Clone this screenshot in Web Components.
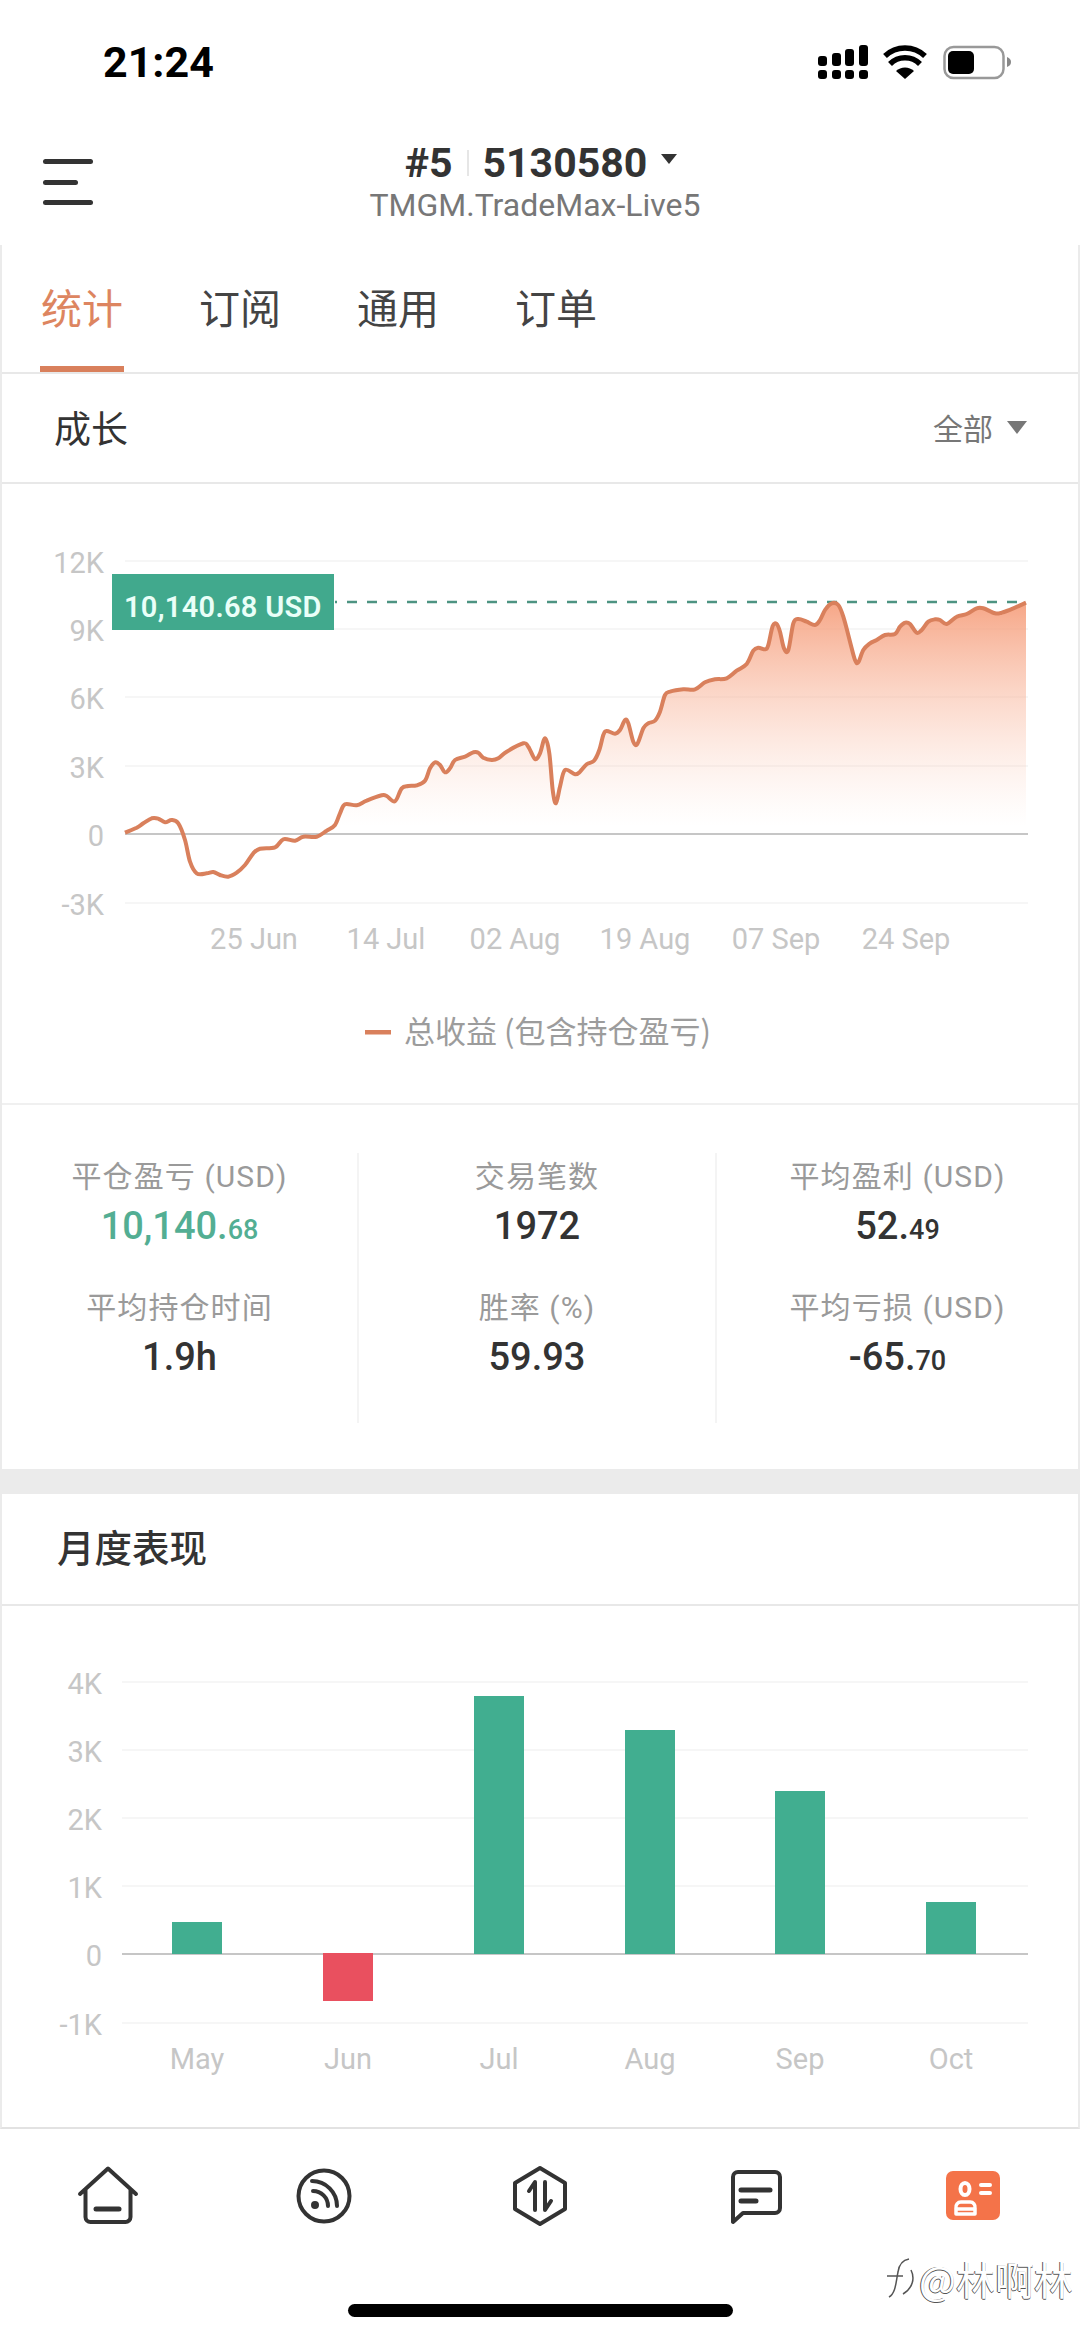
<!DOCTYPE html>
<html lang="zh">
<head>
<meta charset="utf-8">
<title>TMGM.TradeMax-Live5</title>
<style>
  html, body {
    margin: 0;
    background: #fff;
  }
  body {
    width: 1080px;
    height: 2337px;
    overflow: hidden;
    font-family: Roboto, "Noto Sans CJK SC", sans-serif;
    color: #333;
  }
</style>
</head>
<body>
<status-bar></status-bar>
<app-header></app-header>
<main-panel>
  <tab-strip>
    <tab-item active>统计</tab-item>
    <tab-item>订阅</tab-item>
    <tab-item>通用</tab-item>
    <tab-item>订单</tab-item>
  </tab-strip>
  <panel-title heading="成长" action="全部"></panel-title>
  <growth-chart></growth-chart>
  <stat-grid>
    <stat-cell label="平仓盈亏 (USD)" value="10,140." fraction="68" tone="gain"></stat-cell>
    <stat-cell label="交易笔数" value="1972"></stat-cell>
    <stat-cell label="平均盈利 (USD)" value="52." fraction="49"></stat-cell>
    <stat-cell label="平均持仓时间" value="1.9h"></stat-cell>
    <stat-cell label="胜率 (%)" value="59.93"></stat-cell>
    <stat-cell label="平均亏损 (USD)" value="-65." fraction="70"></stat-cell>
  </stat-grid>
  <section-gap></section-gap>
  <panel-title heading="月度表现" strong></panel-title>
  <monthly-chart></monthly-chart>
</main-panel>
<bottom-nav></bottom-nav>

<script>
/**
 * Registers a custom element whose shadow root is cloned from a template.
 *
 * @param {string} name - The tag name.
 * @param {string} html - The shadow markup.
 * @param {Function} [Base] - Optional class with the behaviour of the element.
 */
function defineElement (name, html, Base = HTMLElement) {
  const template = document.createElement('template')
  template.innerHTML = html
  customElements.define(name, class extends Base {
    constructor () {
      super()
      this.attachShadow({ mode: 'open' }).appendChild(template.content.cloneNode(true))
    }
  })
}

defineElement('status-bar', `
  <style>
    :host {
      display: flex;
      justify-content: space-between;
      height: 122px;
      box-sizing: border-box;
      padding: 37px 69px 0 103px;
    }
    #time {
      font: 700 43px/50px Roboto, sans-serif;
      color: #000;
    }
    svg { margin-top: 4px; }
  </style>
  <span id="time">21:24</span>
  <svg width="194" height="40" viewBox="817 40 194 40">
    <g fill="#000">
      <rect x="818" y="55" width="9" height="10" rx="3"/>
      <rect x="832" y="52" width="9" height="13" rx="3"/>
      <rect x="845" y="48" width="9" height="17" rx="3"/>
      <rect x="859" y="44" width="9" height="21" rx="3"/>
      <rect x="818" y="69" width="9" height="9" rx="3"/>
      <rect x="832" y="69" width="9" height="9" rx="3"/>
      <rect x="845" y="69" width="9" height="9" rx="3"/>
      <rect x="859" y="69" width="9" height="9" rx="3"/>
      <path d="M905 78l-9-8a13 13 0 0 1 18 0z"/>
      <path d="M890 63a21 21 0 0 1 30 0" fill="none" stroke="#000" stroke-width="5.5"/>
      <path d="M885 55a29 29 0 0 1 40 0" fill="none" stroke="#000" stroke-width="5.5"/>
      <rect x="944.500" y="46" width="59" height="31" rx="9" fill="none" stroke="#999" stroke-width="2.500"/>
      <rect x="948" y="50" width="26" height="23" rx="5"/>
      <path d="M1007 56c3 1 4 3 4 5s-1 4-4 5z" fill="#888"/>
    </g>
  </svg>
`)

defineElement('app-header', `
  <style>
    :host {
      display: grid;
      grid-template-columns: 100px 1fr 100px;
      height: 123px;
    }
    #menu {
      display: flex;
      flex-direction: column;
      gap: 15.500px;
      padding: 37px 0 0 43px;
    }
    #menu i {
      display: block;
      width: 50px;
      height: 5px;
      border-radius: 3px;
      background: #333;
    }
    #menu i:nth-child(2) { width: 35px; }
    #center {
      display: flex;
      flex-direction: column;
      align-items: center;
      padding: 17px 0 0 2px;
    }
    #title {
      display: flex;
      align-items: center;
      height: 48px;
      font: 700 41px/48px Roboto, sans-serif;
      color: #333;
    }
    #divider {
      width: 2px;
      height: 26px;
      margin: 0 14px;
      background: #e6e6e6;
    }
    #caret {
      width: 0;
      height: 0;
      margin: -8px 0 0 14px;
      border-style: solid;
      border-width: 10px 8px 0;
      border-color: #333 transparent transparent;
    }
    #server {
      font: 400 32px/36px Roboto, sans-serif;
      color: #777;
      margin-right: 12px;
    }
  </style>
  <div id="menu"><i></i><i></i><i></i></div>
  <div id="center">
    <div id="title"><span>#5</span><span id="divider"></span><span>5130580</span><span id="caret"></span></div>
    <div id="server">TMGM.TradeMax-Live5</div>
  </div>
`)

defineElement('main-panel', `
  <style>
    :host {
      display: block;
      height: 1882px;
      border-left: 2px solid #ebebeb;
      border-right: 2px solid #ebebeb;
      border-bottom: 2px solid #e2e2e2;
    }
  </style>
  <slot></slot>
`)

defineElement('tab-strip', `
  <style>
    :host {
      display: flex;
      gap: 74px;
      height: 129px;
      box-sizing: border-box;
      padding-left: 38px;
      border-bottom: 2px solid #e8e8e8;
    }
  </style>
  <slot></slot>
`)

defineElement('tab-item', `
  <style>
    :host {
      display: flex;
      align-items: center;
      box-sizing: border-box;
      height: 127px;
      padding: 0 1px 6px;
      font: 400 41px/48px "Noto Sans CJK SC", sans-serif;
      color: #444;
    }
    :host([active]) {
      color: #dd8560;
      box-shadow: inset 0 -6px 0 #d9805c;
    }
  </style>
  <slot></slot>
`)

/**
 * A section heading with an optional dropdown on the right.
 */
class PanelTitle extends HTMLElement {
  /**
   * Fills the heading from its attributes.
   */
  connectedCallback () {
    this.shadowRoot.querySelector('#heading').textContent = this.getAttribute('heading')
    const action = this.getAttribute('action')
    if (action) {
      this.shadowRoot.querySelector('#label').textContent = action
    } else {
      this.shadowRoot.querySelector('#action').hidden = true
    }
  }
}

defineElement('panel-title', `
  <style>
    :host {
      display: flex;
      justify-content: space-between;
      align-items: center;
      box-sizing: border-box;
      height: 110px;
      padding: 0 51px 2px 52px;
      border-bottom: 2px solid #e8e8e8;
      font-family: "Noto Sans CJK SC", sans-serif;
    }
    #heading {
      font-size: 37px;
      font-weight: 400;
      color: #333;
    }
    :host([strong]) {
      height: 112px;
      padding-left: 55px;
      padding-bottom: 7px;
    }
    :host([strong]) #heading {
      font-size: 37.500px;
      font-weight: 500;
    }
    #action {
      display: flex;
      align-items: center;
      gap: 14px;
      font-size: 30px;
      color: #777;
    }
    #action[hidden] { display: none; }
    #caret {
      width: 0;
      height: 0;
      border-style: solid;
      border-width: 13px 10px 0;
      border-color: #777 transparent transparent;
    }
  </style>
  <span id="heading"></span>
  <span id="action"><span id="label"></span><span id="caret"></span></span>
`, PanelTitle)

// Curve traced from 3x crops of the reference, so these are crop pixels.
const CURVE_LEFT = [[75, 818], [110, 803], [130, 790], [155, 775], [175, 776], [195, 787], [215, 780], [235, 790], [255, 840], [270, 905], [290, 940], [320, 940], [340, 936], [360, 945], [385, 950], [410, 938], [435, 915], [460, 880], [480, 866], [525, 862], [550, 838], [585, 842], [610, 830], [650, 830], [680, 812], [705, 795], [720, 760], [735, 733], [770, 736], [800, 722], [845, 706], [860, 708], [885, 724], [905, 685], [925, 678], [950, 676], [975, 662], [990, 625], [1005, 607], [1020, 615], [1035, 637], [1050, 625], [1065, 600], [1095, 590], [1120, 577], [1135, 578], [1150, 593], [1175, 600], [1195, 595], [1220, 575], [1270, 550], [1285, 560], [1305, 597], [1320, 580], [1335, 535], [1348, 580], [1358, 690], [1368, 730], [1380, 680], [1395, 630], [1425, 643]]
const CURVE_RIGHT = [[0, 635], [20, 613], [42, 602], [58, 570], [70, 525], [80, 513], [105, 521], [120, 510], [135, 480], [145, 490], [160, 545], [172, 552], [190, 505], [205, 490], [225, 482], [240, 455], [255, 405], [270, 395], [310, 388], [345, 388], [375, 367], [405, 358], [440, 355], [470, 332], [500, 312], [520, 272], [535, 263], [555, 268], [565, 255], [578, 198], [590, 192], [600, 215], [612, 265], [625, 270], [640, 190], [655, 177], [680, 185], [705, 195], [720, 180], [735, 150], [755, 130], [775, 135], [790, 170], [810, 245], [825, 300], [835, 307], [850, 270], [870, 250], [890, 240], [915, 225], [945, 222], [960, 200], [975, 188], [990, 192], [1010, 218], [1025, 210], [1045, 185], [1065, 178], [1080, 180], [1100, 192], [1130, 170], [1160, 162], [1190, 145], [1210, 145], [1245, 160], [1265, 158], [1300, 145], [1338, 128]]

/**
 * Turns points into a smooth path through all of them.
 *
 * @param {Array} points - The [x, y] points.
 * @returns {string} The path data.
 */
function smoothPath (points) {
  let d = `M${points[0][0]} ${points[0][1]}`
  for (let i = 0; i < points.length - 1; i++) {
    const p0 = points[Math.max(i - 1, 0)]
    const p1 = points[i]
    const p2 = points[i + 1]
    const p3 = points[Math.min(i + 2, points.length - 1)]
    const c1 = [p1[0] + (p2[0] - p0[0]) / 6, p1[1] + (p2[1] - p0[1]) / 6]
    const c2 = [p2[0] - (p3[0] - p1[0]) / 6, p2[1] - (p3[1] - p1[1]) / 6]
    d += `C${c1[0].toFixed(1)} ${c1[1].toFixed(1)} ${c2[0].toFixed(1)} ${c2[1].toFixed(1)} ${p2[0].toFixed(1)} ${p2[1].toFixed(1)}`
  }
  return d
}

/**
 * Builds the gridlines and axis labels of a chart.
 *
 * @param {Array} rows - The [y, label] rows; label '0' gets the zero line.
 * @param {number} left - Where the lines start.
 * @param {number} labelX - Right edge of the labels.
 * @returns {string} SVG markup.
 */
function axisRows (rows, left, labelX) {
  return rows.map(([y, label]) => {
    const zero = label === '0'
    return `<line x1="${left}" x2="1028" y1="${y}" y2="${y}" stroke="${zero ? '#c6c6c6' : '#f6f6f6'}" stroke-width="2"/>
      <text x="${labelX}" y="${y + 12}" text-anchor="end">${label}</text>`
  }).join('')
}

/**
 * The growth line chart.
 */
class GrowthChart extends HTMLElement {
  /**
   * Draws the curve and the axes.
   */
  connectedCallback () {
    const points = [
      ...CURVE_LEFT.map(([x, y]) => [100 + x / 3, 560 + y / 3]),
      ...CURVE_RIGHT.map(([x, y]) => [580 + x / 3, 560 + y / 3])
    ]
    const line = smoothPath(points)
    const months = [[254, '25 Jun'], [386, '14 Jul'], [515, '02 Aug'], [645, '19 Aug'], [776, '07 Sep'], [906, '24 Sep']]
    this.shadowRoot.querySelector('#axes').innerHTML = axisRows([[561, '12K'], [629, '9K'], [697, '6K'], [766, '3K'], [834, '0'], [903, '-3K']], 125, 104) +
      months.map(([x, label]) => `<text x="${x}" y="949" text-anchor="middle">${label}</text>`).join('')
    this.shadowRoot.querySelector('#area').setAttribute('d', `${line}L1026 834L125 834Z`)
    this.shadowRoot.querySelector('#line').setAttribute('d', line)
  }
}

defineElement('growth-chart', `
  <style>
    :host {
      display: block;
      box-sizing: border-box;
      height: 621px;
      border-bottom: 2px solid #f0f0f0;
    }
    svg { display: block; }
    text {
      font: 400 29px Roboto, sans-serif;
      fill: #c6c6c6;
    }
    #tag {
      font-size: 29px;
      font-weight: 600;
      letter-spacing: .3px;
      fill: #e9fff8;
    }
    #legend {
      font: 400 31px "Noto Sans CJK SC", sans-serif;
      fill: #9c9c9c;
    }
  </style>
  <svg width="1076" height="619" viewBox="2 484 1076 619">
    <defs>
      <linearGradient id="fade" gradientUnits="userSpaceOnUse" x1="0" x2="0" y1="602" y2="826">
        <stop offset="0" stop-color="#f59a76" stop-opacity=".88"/>
        <stop offset=".5" stop-color="#f9bca4" stop-opacity=".48"/>
        <stop offset="1" stop-color="#fbd8ca" stop-opacity="0"/>
      </linearGradient>
    </defs>
    <g id="axes"></g>
    <path id="area" fill="url(#fade)"/>
    <line x1="335" x2="1027" y1="602" y2="602" stroke="#4d9482" stroke-width="2.500" stroke-dasharray="10 10" stroke-dashoffset="-12"/>
    <path id="line" fill="none" stroke="#d9805c" stroke-width="4" stroke-linejoin="round"/>
    <rect x="112" y="574" width="222" height="56" fill="#41a98d"/>
    <text id="tag" x="124" y="617">10,140.68 USD</text>
    <rect x="365" y="1030" width="26" height="4.500" fill="#d9805c"/>
    <text id="legend" x="404" y="1043">总收益 (包含持仓盈亏)</text>
  </svg>
`, GrowthChart)

defineElement('stat-grid', `
  <style>
    :host {
      display: grid;
      grid-template-columns: 357px 358px 361px;
      grid-template-rows: 131px 139px;
      height: 364px;
      box-sizing: border-box;
      padding-top: 48px;
    }
  </style>
  <slot></slot>
`)

/**
 * One figure of the statistics grid.
 */
class StatCell extends HTMLElement {
  /**
   * Fills the cell from its attributes.
   */
  connectedCallback () {
    this.shadowRoot.querySelector('#label').textContent = this.getAttribute('label')
    this.shadowRoot.querySelector('#whole').textContent = this.getAttribute('value')
    this.shadowRoot.querySelector('#fraction').textContent = this.getAttribute('fraction') || ''
  }
}

defineElement('stat-cell', `
  <style>
    :host {
      display: block;
      padding-top: 2px;
      text-align: center;
      border-right: 2px solid #f4f4f4;
    }
    :host(:nth-child(3n)) {
      border-right: 0;
    }
    #label {
      font: 400 30px/43px Roboto, "Noto Sans CJK SC", sans-serif;
      letter-spacing: 1.100px;
      color: #9a9a9a;
    }
    #value {
      font: 500 38px/56px Roboto, sans-serif;
      color: #333;
    }
    #fraction {
      font-size: 27px;
    }
    :host([tone="gain"]) #value {
      color: #53ae93;
    }
  </style>
  <div id="label"></div>
  <div id="value"><span id="whole"></span><span id="fraction"></span></div>
`, StatCell)

defineElement('section-gap', `
  <style>
    :host {
      display: block;
      height: 25px;
      margin: 0 -2px;
      background: #ebebeb;
    }
  </style>
`)

/**
 * The monthly bar chart.
 */
class MonthlyChart extends HTMLElement {
  /**
   * Draws the axes and the bars.
   */
  connectedCallback () {
    const bars = [
      ['May', 172, 1922, 1954, '#41ae90'],
      ['Jun', 323, 1953, 2001, '#e9505f'],
      ['Jul', 474, 1696, 1954, '#41ae90'],
      ['Aug', 625, 1730, 1954, '#41ae90'],
      ['Sep', 775, 1791, 1954, '#41ae90'],
      ['Oct', 926, 1902, 1954, '#41ae90']
    ]
    this.shadowRoot.querySelector('#plot').innerHTML = axisRows([[1682, '4K'], [1750, '3K'], [1818, '2K'], [1886, '1K'], [1954, '0'], [2023, '-1K']], 122, 102) +
      bars.map(([month, x, top, bottom, colour]) => `
        <rect x="${x}" y="${top}" width="50" height="${bottom - top}" fill="${colour}"/>
        <text x="${x + 25}" y="2069" text-anchor="middle">${month}</text>`).join('')
  }
}

defineElement('monthly-chart', `
  <style>
    :host {
      display: block;
      height: 521px;
    }
    svg { display: block; }
    text {
      font: 400 29px Roboto, sans-serif;
      fill: #c6c6c6;
    }
  </style>
  <svg width="1076" height="521" viewBox="2 1606 1076 521"><g id="plot"></g></svg>
`, MonthlyChart)

defineElement('bottom-nav', `
  <style>
    :host {
      display: block;
      position: relative;
      height: 208px;
      box-sizing: border-box;
      padding-top: 35px;
    }
    #icons {
      display: grid;
      grid-template-columns: repeat(5, 216px);
      justify-items: center;
    }
    svg.icon {
      display: block;
      fill: none;
      stroke: #333;
      stroke-width: 4;
      stroke-linecap: round;
      stroke-linejoin: round;
    }
    #home {
      width: 385px;
      height: 13px;
      margin: 76px 0 0 348px;
      border-radius: 7px;
      background: #000;
    }
    #mark {
      position: absolute;
      left: 884px;
      top: 125px;
      display: flex;
      align-items: center;
      gap: 2px;
      font: 400 39px/48px "Noto Sans CJK SC", sans-serif;
      color: #fff;
      text-shadow: -1px 0 0 #555, 0 1px 0 #555;
      white-space: nowrap;
    }
  </style>
  <div id="icons">
    <svg class="icon" width="64" height="64" viewBox="0 0 64 64">
      <path d="M4 30L32 4.500L60 30M9.500 25V53a5 5 0 0 0 5 5H49.500a5 5 0 0 0 5-5V25"/>
      <path d="M20 45H43" stroke-width="5"/>
    </svg>
    <svg class="icon" width="64" height="64" viewBox="0 0 64 64">
      <circle cx="32" cy="32" r="25.500"/>
      <circle cx="23" cy="41" r="2" fill="#333"/>
      <path d="M21 27a15 15 0 0 1 15 15M20 17a25 25 0 0 1 25 25"/>
    </svg>
    <svg class="icon" width="64" height="64" viewBox="0 0 64 64">
      <path d="M32 4L57 19V45L32 60L7 45V19Z"/>
      <path d="M27 46V18L21 27M37 18V46L43 37"/>
    </svg>
    <svg class="icon" width="64" height="64" viewBox="0 0 64 64">
      <path d="M14 8H51a5 5 0 0 1 5 5V44a5 5 0 0 1-5 5H19L9 58V13a5 5 0 0 1 5-5Z"/>
      <path d="M17 26H46M17 37H32" stroke-width="5"/>
    </svg>
    <svg class="icon" width="64" height="64" viewBox="0 0 64 64" style="stroke:#fff">
      <rect x="6" y="7" width="54" height="49" rx="7" fill="#f47349" stroke="none"/>
      <ellipse cx="25" cy="25" rx="4.500" ry="6" stroke-width="4"/>
      <path d="M16 50V44a5 5 0 0 1 5-6H30a5 5 0 0 1 5 6V50ZM17 45H34" stroke-width="3.500"/>
      <path d="M41 21H50M41 29H50" stroke-width="4"/>
    </svg>
  </div>
  <div id="home"></div>
  <div id="mark">
    <svg width="33" height="42" viewBox="0 0 33 42" fill="none" stroke="#555" stroke-width="1.500">
      <path d="M5 40C12 36 12 24 14 15C15 8 19 3 25 2M3 19H19M27 13C31 21 29 31 19 37"/>
    </svg>
    <span>@林啊林</span>
  </div>
`)
</script>
</body>
</html>
